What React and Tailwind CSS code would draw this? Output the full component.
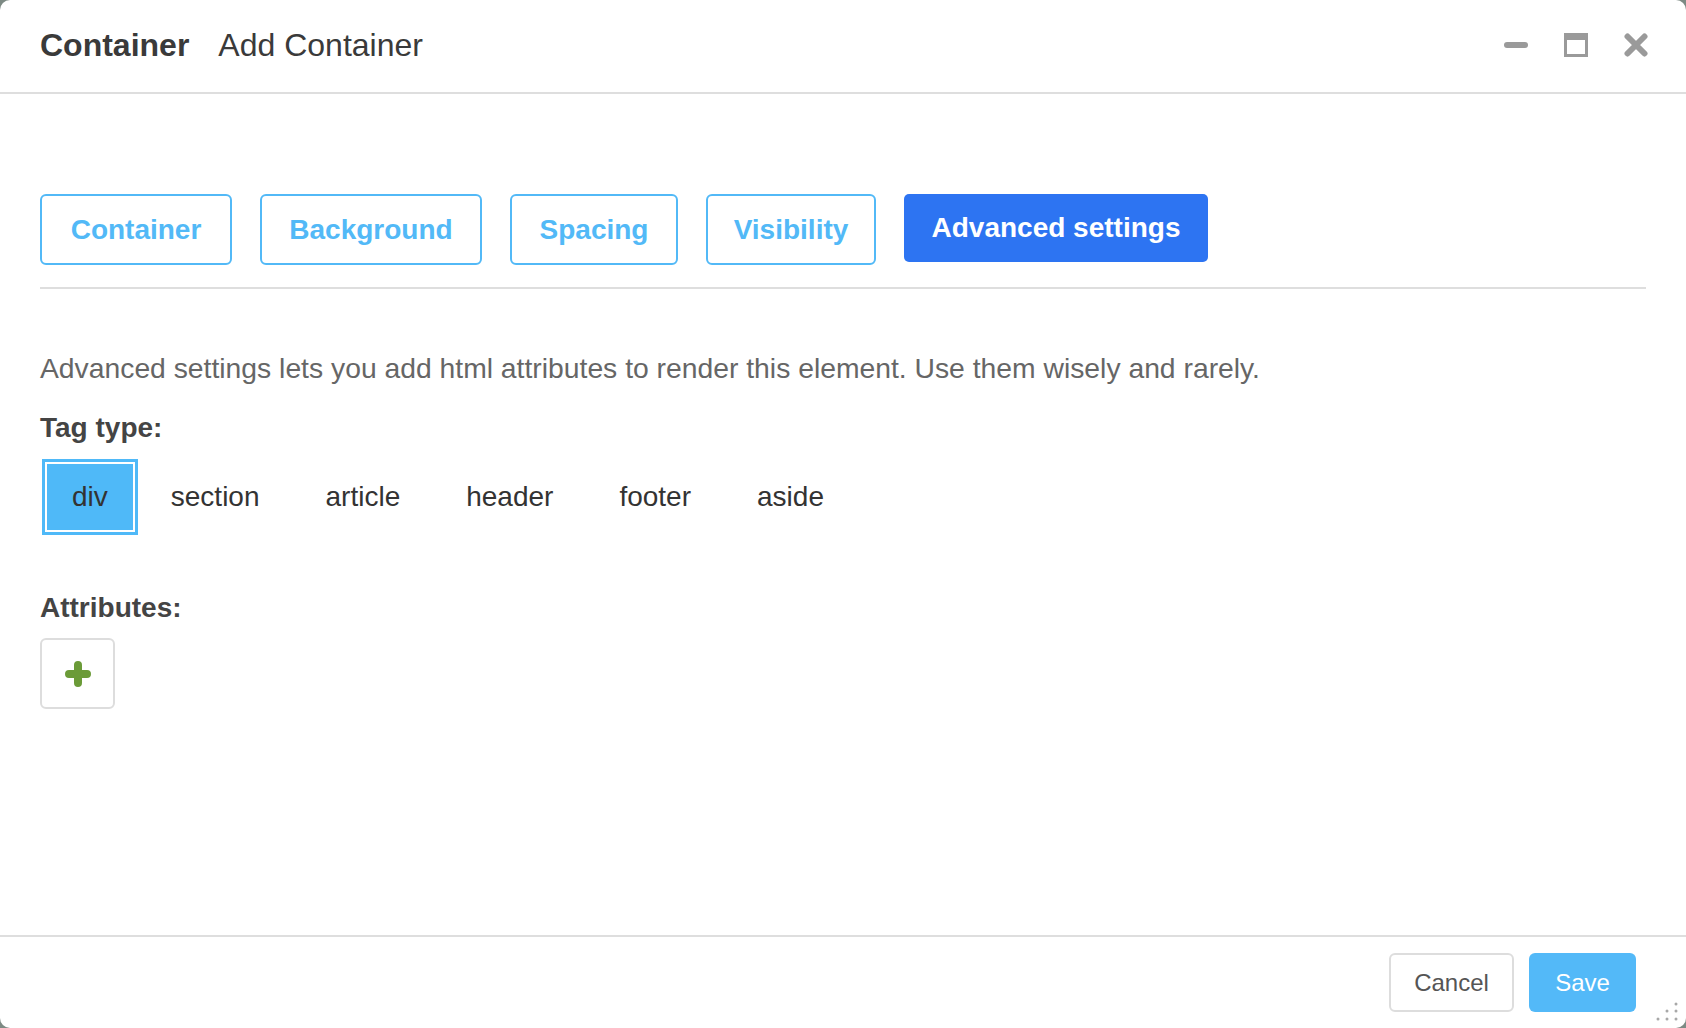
import { useState } from 'react';

const tabs = [
  { label: 'Container', width: 'w-[192px]' },
  { label: 'Background', width: 'w-[222px]' },
  { label: 'Spacing', width: 'w-[168px]' },
  { label: 'Visibility', width: 'w-[170px]' },
  { label: 'Advanced settings', width: 'w-[304px]' },
];
const tagTypes = ['div', 'section', 'article', 'header', 'footer', 'aside'];

const ResizeGrip = () => (
  <svg width="26" height="26" viewBox="0 0 26 26" className="absolute bottom-[6px] right-[6px]">
    <circle cx="22" cy="8" r="1.5" fill="#a8a8a8" />
    <circle cx="13" cy="15" r="1.5" fill="#a8a8a8" />
    <circle cx="22" cy="15" r="1.5" fill="#a8a8a8" />
    <circle cx="4" cy="23" r="1.5" fill="#a8a8a8" />
    <circle cx="13" cy="23" r="1.5" fill="#a8a8a8" />
    <circle cx="22" cy="23" r="1.5" fill="#a8a8a8" />
  </svg>
);

const App = () => {
  const [activeTab, setActiveTab] = useState('Advanced settings');
  const [tagType, setTagType] = useState('div');

  return (
    <div className="h-[1028px] w-full bg-[#7d8a84] font-['Liberation_Sans',Arial,sans-serif]">
      <div className="relative flex h-full flex-col overflow-hidden rounded-[10px] bg-white">
        {/* title bar */}
        <div className="flex h-[94px] shrink-0 items-center justify-between border-b-2 border-[#dedede] pl-10 pr-[38px] pb-[3px]">
          <div className="flex items-baseline gap-[29px] text-[32px] text-[#3a3a3a]">
            <span className="font-bold">Container</span>
            <span>Add Container</span>
          </div>
          <div className="flex items-center gap-9">
            <button className="flex h-6 w-6 items-center">
              <span className="h-[6px] w-6 rounded-[3px] bg-[#9a9a9a]" />
            </button>
            <button className="h-6 w-6 border-[3px] border-t-[7px] border-[#9a9a9a]" />
            <button className="h-6 w-6">
              <svg viewBox="0 0 24 24" width="24" height="24">
                <path d="M3.5 3.5 L20.5 20.5 M20.5 3.5 L3.5 20.5" stroke="#9a9a9a" strokeWidth="6" strokeLinecap="round" />
              </svg>
            </button>
          </div>
        </div>

        {/* body */}
        <div className="flex-1 px-10 pt-[100px]">
          <div className="flex items-start gap-7 border-b-2 border-[#dedede] pb-[22px]">
            {tabs.map((tab) =>
              tab.label === activeTab ? (
                <button
                  key={tab.label}
                  onClick={() => setActiveTab(tab.label)}
                  className={`${tab.width} h-[68px] rounded-[5px] bg-[#2d74f2] text-[28px] font-bold whitespace-nowrap text-white`}
                >
                  {tab.label}
                </button>
              ) : (
                <button
                  key={tab.label}
                  onClick={() => setActiveTab(tab.label)}
                  className={`${tab.width} h-[71px] rounded-[6px] border-2 border-[#52b9f7] text-[28px] font-bold whitespace-nowrap text-[#52b9f7]`}
                >
                  {tab.label}
                </button>
              )
            )}
          </div>

          <p className="mt-[62px] text-[28.3px] leading-[34px] text-[#666666]">
            Advanced settings lets you add html attributes to render this element. Use them wisely and rarely.
          </p>

          <div className="mt-[26px] text-[28px] font-bold leading-[34px] text-[#444444]">Tag type:</div>
          <div className="ml-[2px] mt-[14px] flex">
            {tagTypes.map((t, i) => (
              <button
                key={t}
                onClick={() => setTagType(t)}
                className={
                  t === tagType
                    ? `h-[76px] border-[3px] border-[#4fb9f8] bg-[#4fb9f8] ${i === 0 ? 'px-[27px]' : 'px-[30px]'} text-[28px] text-[#333333] shadow-[inset_0_0_0_2px_white]`
                    : `h-[76px] border-[3px] border-transparent ${i === 0 ? 'px-[27px]' : 'px-[30px]'} text-[28px] text-[#333333]`
                }
              >
                {t}
              </button>
            ))}
          </div>

          <div className="mt-[56px] text-[28px] font-bold leading-[34px] text-[#444444]">Attributes:</div>
          <button className="mt-[13px] flex h-[71px] w-[75px] items-center justify-center rounded-[6px] border-2 border-[#dddddd] bg-white">
            <svg viewBox="0 0 26 26" width="26" height="26">
              <path d="M13 4 V22 M4 13 H22" stroke="#6b9b38" strokeWidth="8" strokeLinecap="round" />
            </svg>
          </button>
        </div>

        {/* footer */}
        <div className="relative flex h-[93px] shrink-0 items-center justify-end gap-[15px] border-t-2 border-[#dedede] pr-[50px]">
          <button className="h-[59px] w-[125px] rounded-[6px] border-2 border-[#dddddd] bg-white text-[24px] text-[#555555]">
            Cancel
          </button>
          <button className="h-[59px] w-[107px] rounded-[6px] bg-[#53b9f8] text-[24px] text-white">Save</button>
          <ResizeGrip />
        </div>
      </div>
    </div>
  );
};

export default App;
